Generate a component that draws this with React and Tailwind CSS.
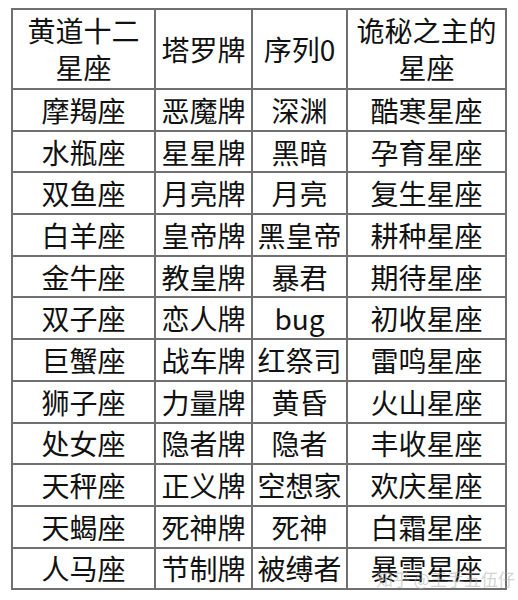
import React from 'react';

const rows = [
  ['摩羯座', '恶魔牌', '深渊', '酷寒星座'],
  ['水瓶座', '星星牌', '黑暗', '孕育星座'],
  ['双鱼座', '月亮牌', '月亮', '复生星座'],
  ['白羊座', '皇帝牌', '黑皇帝', '耕种星座'],
  ['金牛座', '教皇牌', '暴君', '期待星座'],
  ['双子座', '恋人牌', 'bug', '初收星座'],
  ['巨蟹座', '战车牌', '红祭司', '雷鸣星座'],
  ['狮子座', '力量牌', '黄昏', '火山星座'],
  ['处女座', '隐者牌', '隐者', '丰收星座'],
  ['天秤座', '正义牌', '空想家', '欢庆星座'],
  ['天蝎座', '死神牌', '死神', '白霜星座'],
  ['人马座', '节制牌', '被缚者', '暴雪星座'],
];

const cell = 'border-2 border-[#707070] text-center align-middle p-0';

export default function App() {
  return (
    <div
      className="relative w-[518px] h-[600px] bg-white pt-[8px] pl-[11px] text-[#111] overflow-hidden"
      style={{ fontFamily: '"Noto Sans CJK SC", "Noto Sans", sans-serif' }}
    >
      <table className="border-collapse table-fixed w-[494px] text-[28px] leading-[34px]">
        <colgroup>
          <col className="w-[143px]" />
          <col className="w-[97px]" />
          <col className="w-[95px]" />
          <col className="w-[159px]" />
        </colgroup>
        <thead>
          <tr className="h-[80px] leading-[37px]">
            <th className={`${cell} font-normal`}>黄道十二<br />星座</th>
            <th className={`${cell} font-normal`}>塔罗牌</th>
            <th className={`${cell} font-normal`}>序列0</th>
            <th className={`${cell} font-normal`}>诡秘之主的<br />星座</th>
          </tr>
        </thead>
        <tbody>
          {rows.map((r, i) => (
            <tr key={i} className="h-[41.7px]">
              {r.map((c, j) => (
                <td key={j} className={cell}>{c}</td>
              ))}
            </tr>
          ))}
        </tbody>
      </table>

      {/* watermark */}
      <div className="absolute left-[376px] top-[566px] text-[17px] text-[#aaa] opacity-50 whitespace-nowrap">
        知乎 @王手五伍仔
      </div>
    </div>
  );
}
